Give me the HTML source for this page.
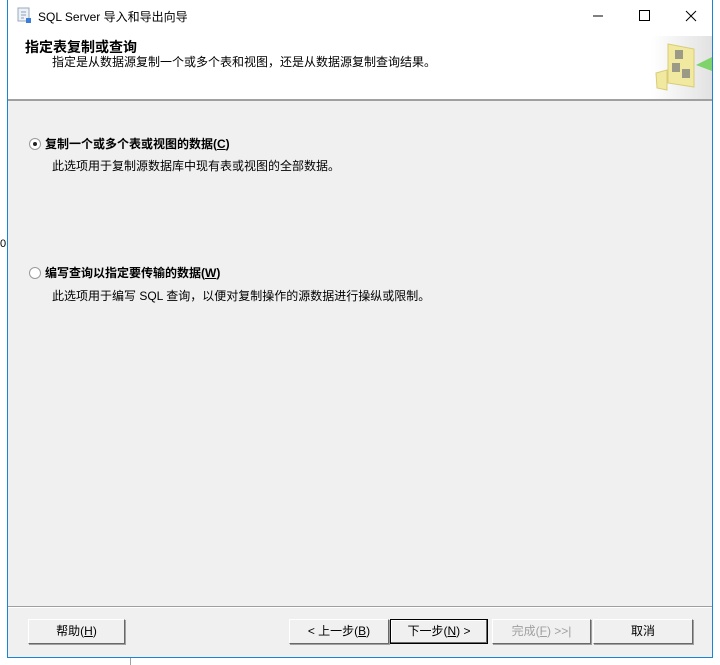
<!DOCTYPE html>
<html><head><meta charset="utf-8"><style>
body{margin:0;width:720px;height:665px;background:#fff;position:relative;overflow:hidden;font-family:"Liberation Sans","Noto Sans CJK SC","WenQuanYi Zen Hei",sans-serif;font-size:12px;color:#000}
.win{position:absolute;left:7px;top:0;width:704px;height:657px;border:1px solid #1883d7;border-top:none;background:#f0f0f0}
.title{position:absolute;left:0;top:0;width:704px;height:31px;background:#fff}
.hdr{position:absolute;left:0;top:31px;width:704px;height:68px;background:#fff;border-bottom:2px solid #a0a0a0}
.abs{position:absolute;white-space:nowrap}
.btn{position:absolute;top:619px;height:23px;background:#f0f0f0;border:1px solid;border-color:#fff #696969 #696969 #fff;box-shadow:1px 1px 0 #a0a0a0;text-align:center;line-height:23px;font-size:12px}
.radio{position:absolute;width:10px;height:10px;border:1px solid #9a9a9a;border-radius:50%;background:#fff}
</style></head><body>
<div class="win">
 <div class="title">
  <svg class="abs" style="left:8px;top:7px" width="16" height="16"><rect x="2" y="1" width="11" height="13" fill="#eef2f8" stroke="#9aa8bc"/><path d="M5 5h5M5 8h5M5 11h3" stroke="#8fa0b8"/><rect x="10" y="11" width="5" height="5" fill="#3b7dd8"/></svg>
  <div class="abs" style="left:30px;top:8px;font-size:12px">SQL Server 导入和导出向导</div>
  <svg class="abs" style="left:580px;top:8px" width="120" height="16"><path d="M5 8h10" stroke="#000"/><rect x="51.5" y="2.5" width="10" height="10" fill="none" stroke="#000"/><path d="M98 3l10 10M108 3l-10 10" stroke="#000"/></svg>
 </div>
 <div class="hdr">
  <div class="abs" style="left:17px;top:6px;font-size:14px;font-weight:bold">指定表复制或查询</div>
  <div class="abs" style="left:44px;top:22px">指定是从数据源复制一个或多个表和视图，还是从数据源复制查询结果。</div>
  <div class="abs" style="left:643px;top:5px;width:61px;height:63px;background:linear-gradient(90deg,#fff,#e2e2e2)"></div>
  <svg class="abs" style="left:645px;top:10px" width="59" height="52"><path d="M15 3l26 5v38l-26-4z" fill="#f2e9a0" stroke="#d8cc78"/><path d="M3 32l11-3v20l-10-2z" fill="#f2e9a0" stroke="#d8cc78"/><rect x="22" y="9" width="8" height="9" fill="#9a9a86"/><rect x="19" y="22" width="8" height="9" fill="#9a9a86"/><rect x="29" y="28" width="8" height="9" fill="#9a9a86"/><path d="M43 24l16-8v14z" fill="#7ed36a"/></svg>
 </div>
 <div class="radio" style="left:21px;top:138px"></div><div class="abs" style="left:25px;top:142px;width:4px;height:4px;background:#222;border-radius:50%"></div>
 <div class="abs" style="left:37px;top:135px;font-weight:bold">复制一个或多个表或视图的数据(<u>C</u>)</div>
 <div class="abs" style="left:44px;top:157px">此选项用于复制源数据库中现有表或视图的全部数据。</div>
 <div class="radio" style="left:21px;top:267px"></div>
 <div class="abs" style="left:37px;top:264px;font-weight:bold">编写查询以指定要传输的数据(<u>W</u>)</div>
 <div class="abs" style="left:44px;top:287px">此选项用于编写 SQL 查询，以便对复制操作的源数据进行操纵或限制。</div>
 <div class="abs" style="left:0;top:606px;width:704px;height:1px;background:#a0a0a0"></div>
 <div class="abs" style="left:0;top:607px;width:704px;height:1px;background:#fff"></div>
 <div class="btn" style="left:20px;width:95px">帮助(<u>H</u>)</div>
 <div class="btn" style="left:281px;width:98px">&lt; 上一步(<u>B</u>)</div>
 <div class="btn" style="left:382px;width:96px;border:1px solid #000;box-shadow:inset -1px -1px 0 #696969,inset 1px 1px 0 #fff">下一步(<u>N</u>) &gt;</div>
 <div class="btn" style="left:484px;width:97px;color:#a0a0a0">完成(<u>F</u>) &gt;&gt;|</div>
 <div class="btn" style="left:585px;width:98px">取消</div>
</div>
<div class="abs" style="left:130px;top:658px;width:1px;height:7px;background:#a0a0a0"></div>
<div class="abs" style="left:0;top:238px;font-size:11px">0</div>
</body></html>
